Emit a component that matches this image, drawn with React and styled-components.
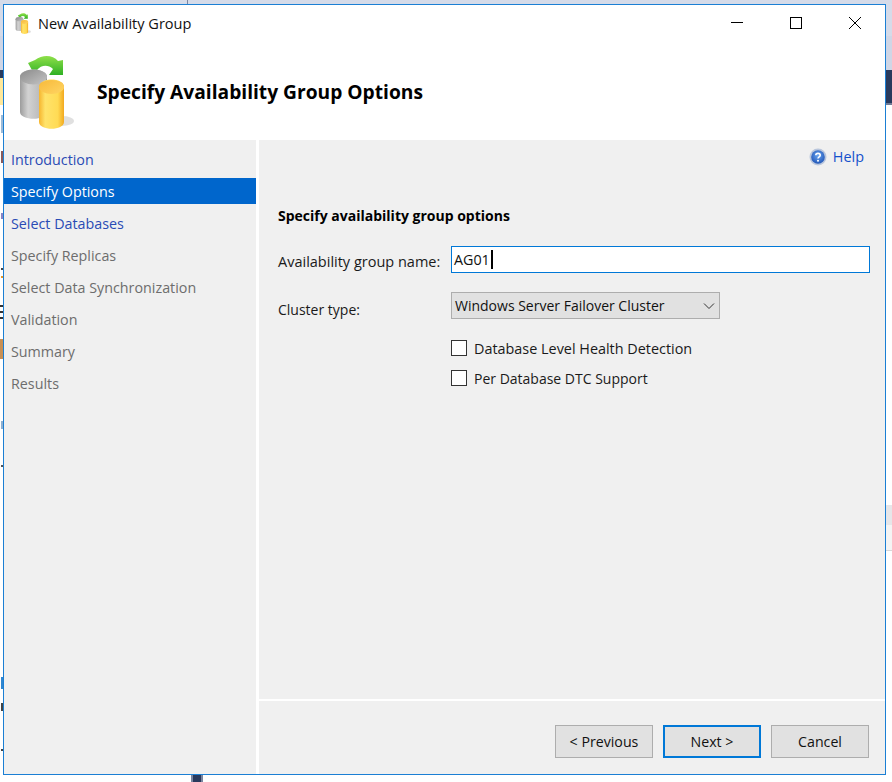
import React from 'react';
import styled, { createGlobalStyle } from 'styled-components';

const Global = createGlobalStyle`
  html, body { margin: 0; padding: 0; background: #fff; }
  body { width: 892px; height: 782px; overflow: hidden; font-family: "Open Sans", "Noto Sans", "Liberation Sans", sans-serif; }
`;

const Desktop = styled.div`
  position: relative;
  width: 892px;
  height: 782px;
  overflow: hidden;
  background: #fff;
  display: flex;
  justify-content: space-between;
`;
const Edge = styled.div`
  width: ${p => p.$w}px;
  display: flex;
  flex-direction: column;
`;
const EdgeBit = styled.div`
  flex: none;
  height: ${p => p.$h}px;
  background: ${p => p.$c};
  margin-left: ${p => p.$inset || 0}px;
`;
const BottomTick = styled.div`
  position: absolute;
  left: 191px;
  top: 775px;
  width: 12px;
  height: 7px;
  box-sizing: border-box;
  border: solid #7a85a0;
  border-width: 0 2px;
  background: #293a5d;
`;
const TopTick = styled.div`
  position: absolute;
  left: 187px;
  top: 0;
  width: 1px;
  height: 4px;
  background: #7a85a0;
`;
const TopStrip = styled.div`
  position: absolute;
  left: 0;
  top: 0;
  width: 100%;
  height: 4px;
  background: #d5dbe9;
`;
const Dialog = styled.div`
  position: absolute;
  left: 3px;
  top: 4px;
  width: 883px;
  height: 771px;
  box-sizing: border-box;
  border: 1px solid #1b7fd4;
  background: #f0f0f0;
  display: flex;
  flex-direction: column;
  color: #1a1a1a;
`;
const Head = styled.div`
  height: 135px;
  flex: none;
  background: #fff;
  display: flex;
  flex-direction: column;
`;
const TitleBar = styled.div`
  height: 36px;
  flex: none;
  display: flex;
  align-items: center;
  padding: 0 1px 0 10px;
  gap: 6px;
`;
const TitleText = styled.span`
  font-size: 14.55px;
  color: #111;
`;
const WindowButtons = styled.div`
  margin-left: auto;
  display: flex;
  align-items: center;
`;
const WindowButton = styled.div`
  width: 59px;
  height: 36px;
  display: flex;
  align-items: center;
  justify-content: center;
`;
const Banner = styled.div`
  flex: 1;
  display: flex;
  align-items: center;
  padding: 3px 0 0 12px;
  gap: 21px;
`;
const BannerTitle = styled.h1`
  margin: 0 0 2px;
  font-size: 19.2px;
  font-weight: 700;
  color: #000;
`;
const Body = styled.div`
  flex: 1;
  display: flex;
  min-height: 0;
`;
const Nav = styled.nav`
  width: 252px;
  flex: none;
  padding-top: 6px;
  display: flex;
  flex-direction: column;
  gap: 6px;
  background: #f0f0f0;
  border-right: 3px solid #fff;
`;
const NavItem = styled.div`
  height: 26px;
  display: flex;
  align-items: center;
  padding-left: 7px;
  font-size: 14.3px;
  color: ${p => p.$active ? '#fff' : p.$link ? '#2a4bb5' : '#6d6d6d'};
  background: ${p => p.$active ? '#0066cc' : 'transparent'};
`;
const Main = styled.main`
  flex: 1;
  display: flex;
  flex-direction: column;
  min-width: 0;
`;
const Content = styled.div`
  flex: 1;
  display: flex;
  flex-direction: column;
  padding: 0 15px 0 19px;
`;
const HelpRow = styled.div`
  height: 33px;
  margin-bottom: 2px;
  display: flex;
  justify-content: flex-end;
  align-items: center;
  gap: 6px;
  padding: 0 6px 0 0;
  font-size: 14.4px;
  color: #1550cc;
`;
const SectionTitle = styled.h2`
  margin: 31px 0 0;
  height: 20px;
  font-size: 14px;
  line-height: 20px;
  font-weight: 700;
  color: #000;
`;
const FormRow = styled.div`
  display: grid;
  grid-template-columns: 173px 1fr;
  align-items: center;
  margin-top: ${p => p.$top}px;
  font-size: 14px;
`;
const FieldLabel = styled.label`
  color: #1a1a1a;
  font-size: ${p => p.$size || 14}px;
  position: relative;
  top: ${p => p.$shift || 0}px;
`;
const NameInput = styled.div`
  height: 27px;
  box-sizing: border-box;
  border: 1px solid #0078d7;
  background: #fff;
  display: flex;
  align-items: center;
  padding-left: 2px;
  font-size: 14.3px;
  color: #111;
`;
const Caret = styled.span`
  width: 2px;
  height: 19px;
  background: #000;
  margin-left: 1px;
`;
const Combo = styled.div`
  width: 269px;
  height: 27px;
  box-sizing: border-box;
  border: 1px solid #adadad;
  background: #e1e1e1;
  display: flex;
  align-items: center;
  justify-content: space-between;
  padding: 0 3px 0 3px;
  color: #111;
`;
const CheckRow = styled.div`
  display: flex;
  align-items: center;
  gap: 7px;
  height: 16px;
  margin: ${p => p.$top}px 0 0 173px;
  font-size: ${p => p.$size || 14}px;
  color: #1a1a1a;
`;
const Check = styled.span`
  width: 16px;
  height: 16px;
  box-sizing: border-box;
  border: 1px solid #333;
  background: #fff;
  flex: none;
`;
const Footer = styled.div`
  height: 75px;
  flex: none;
  box-sizing: border-box;
  border-top: 2px solid #fff;
  display: flex;
  justify-content: flex-end;
  gap: 10px;
  padding: 24px 16px 0 0;
`;
const Button = styled.div`
  width: 98px;
  height: 33px;
  box-sizing: border-box;
  border: ${p => p.$primary ? '2px solid #0078d7' : '1px solid #adadad'};
  background: #e1e1e1;
  display: flex;
  align-items: center;
  justify-content: center;
  font-size: 14.2px;
  color: #111;
`;

function DbIcon({ id, width, height }) {
  return (
    <svg width={width} height={height} viewBox="0 0 60 74" style={{ flex: 'none' }}>
      <defs>
        <linearGradient id={id + 'a'} x1="0" x2="1" y1="0" y2="0">
          <stop offset="0" stopColor="#9c9c9c" />
          <stop offset=".3" stopColor="#d2d2d2" />
          <stop offset=".7" stopColor="#bdbdbd" />
          <stop offset="1" stopColor="#8c8c8c" />
        </linearGradient>
        <linearGradient id={id + 'b'} x1="0" x2="1" y1="0" y2="0">
          <stop offset="0" stopColor="#f6b52e" />
          <stop offset=".25" stopColor="#ffe36b" />
          <stop offset=".75" stopColor="#ffdb55" />
          <stop offset="1" stopColor="#f2a91f" />
        </linearGradient>
        <linearGradient id={id + 'c'} x1="0" x2="0" y1="0" y2="1">
          <stop offset="0" stopColor="#8fe04a" />
          <stop offset="1" stopColor="#2fb024" />
        </linearGradient>
        <linearGradient id={id + 'd'} x1="0" x2="1" y1="0" y2="1">
          <stop offset="0" stopColor="#8a8a8a" />
          <stop offset="1" stopColor="#c4c4c4" />
        </linearGradient>
        <linearGradient id={id + 'e'} x1="0" x2="1" y1="0" y2="1">
          <stop offset="0" stopColor="#f7b93a" />
          <stop offset="1" stopColor="#ffd563" />
        </linearGradient>
      </defs>
      <ellipse cx="46" cy="66" rx="12" ry="5" fill="#000" opacity=".12" />
      <path d="M12 8 L19 5 C27 -1 37 0 42 6 L47 5 L47 20 L33 20 L37 14 C32 9 25 10 21 15 L17 17 Z" fill={`url(#${id}c)`} />
      <path d="M4 22 C4 12 31 12 31 22 L31 57 C31 66 4 66 4 57 Z" fill={`url(#${id}a)`} />
      <ellipse cx="17.5" cy="22" rx="13.5" ry="7.5" fill={`url(#${id}d)`} />
      <path d="M23 32 C23 22 48 22 48 32 L48 67 C48 76 23 76 23 67 Z" fill={`url(#${id}b)`} />
      <ellipse cx="35.5" cy="32" rx="12.5" ry="7" fill={`url(#${id}e)`} />
    </svg>
  );
}

const leftBits = [
  [36, '#d5dbe9'], [34, '#cfd6e6'], [8, '#293a5d'], [27, '#ffe89a'], [10, '#fff'],
  [18, '#9dbbd8', 1], [18, '#fff'], [12, '#8a5a5a', 1], [50, '#fff'], [6, '#8a84c4', 1],
  [49, '#fff'], [2, '#444', 1], [6, '#fff'], [2, '#e59a2c', 1], [27, '#fff'], [2, '#333'],
  [4, '#fff'], [2, '#333'], [4, '#fff'], [2, '#333'], [20, '#fff'], [20, '#c99054'],
  [62, '#fff'], [8, '#8fb0d0', 1], [36, '#fff'], [2, '#555', 1], [210, '#fff'],
  [12, '#2f86d0', 1], [14, '#fff'], [8, '#444', 1], [38, '#fff'], [2, '#444', 1], [60, '#fff'],
];
const rightBits = [
  [36, '#d5dbe9'], [34, '#cfd6e6'], [33, '#293a5d'], [2, '#6f7a96'], [400, '#fff'],
  [20, '#e6e6e9'], [25, '#f4f4f4'], [1, '#d8d8d8'], [231, '#fff'],
];

export default function App() {
  return (
    <Desktop>
      <Global />
      <Edge $w={3}>
        {leftBits.map(([h, c, inset], i) => <EdgeBit key={i} $h={h} $c={c} $inset={inset} />)}
      </Edge>
      <Edge $w={6}>
        {rightBits.map(([h, c], i) => <EdgeBit key={i} $h={h} $c={c} />)}
      </Edge>
      <TopStrip />
      <TopTick />
      <BottomTick />
      <Dialog>
        <Head>
          <TitleBar>
            <DbIcon id="s" width={18} height={21} />
            <TitleText>New Availability Group</TitleText>
            <WindowButtons>
              <WindowButton>
                <svg width="12" height="12" viewBox="0 0 12 12"><path d="M0 5.5H12" stroke="#000" /></svg>
              </WindowButton>
              <WindowButton>
                <svg width="12" height="12" viewBox="0 0 12 12"><rect x=".5" y=".5" width="11" height="11" fill="none" stroke="#000" /></svg>
              </WindowButton>
              <WindowButton>
                <svg width="12" height="12" viewBox="0 0 12 12"><path d="M0 0L12 12M12 0L0 12" stroke="#000" /></svg>
              </WindowButton>
            </WindowButtons>
          </TitleBar>
          <Banner>
            <DbIcon id="l" width={60} height={74} />
            <BannerTitle>Specify Availability Group Options</BannerTitle>
          </Banner>
        </Head>
        <Body>
          <Nav>
            <NavItem $link>Introduction</NavItem>
            <NavItem $active>Specify Options</NavItem>
            <NavItem $link>Select Databases</NavItem>
            <NavItem>Specify Replicas</NavItem>
            <NavItem>Select Data Synchronization</NavItem>
            <NavItem>Validation</NavItem>
            <NavItem>Summary</NavItem>
            <NavItem>Results</NavItem>
          </Nav>
          <Main>
            <Content>
              <HelpRow>
                <svg width="18" height="18" viewBox="0 0 18 18">
                  <defs>
                    <radialGradient id="h" cx=".5" cy=".4" r=".6">
                      <stop offset="0" stopColor="#6aa5ee" />
                      <stop offset="1" stopColor="#2257b8" />
                    </radialGradient>
                  </defs>
                  <circle cx="9" cy="9" r="8.5" fill="#b9c6dc" />
                  <circle cx="9" cy="9" r="6.8" fill="url(#h)" />
                  <path d="M6.8 7.2C6.8 4.8 11.2 4.8 11.2 7.2C11.2 8.8 9 8.8 9 10.5" fill="none" stroke="#fff" strokeWidth="1.6" />
                  <circle cx="9" cy="12.7" r="1" fill="#fff" />
                </svg>
                Help
              </HelpRow>
              <SectionTitle>Specify availability group options</SectionTitle>
              <FormRow $top={20}>
                <FieldLabel $size={14.5} $shift={2}>Availability group name:</FieldLabel>
                <NameInput>AG01<Caret /></NameInput>
              </FormRow>
              <FormRow $top={19}>
                <FieldLabel $shift={4}>Cluster type:</FieldLabel>
                <Combo>
                  Windows Server Failover Cluster
                  <svg width="14" height="14" viewBox="0 0 14 14"><path d="M2 4.5L7 9.5L12 4.5" fill="none" stroke="#333" /></svg>
                </Combo>
              </FormRow>
              <CheckRow $top={21} $size={14.4}><Check />Database Level Health Detection</CheckRow>
              <CheckRow $top={14}><Check />Per Database DTC Support</CheckRow>
            </Content>
            <Footer>
              <Button>&lt; Previous</Button>
              <Button $primary>Next &gt;</Button>
              <Button>Cancel</Button>
            </Footer>
          </Main>
        </Body>
      </Dialog>
    </Desktop>
  );
}
